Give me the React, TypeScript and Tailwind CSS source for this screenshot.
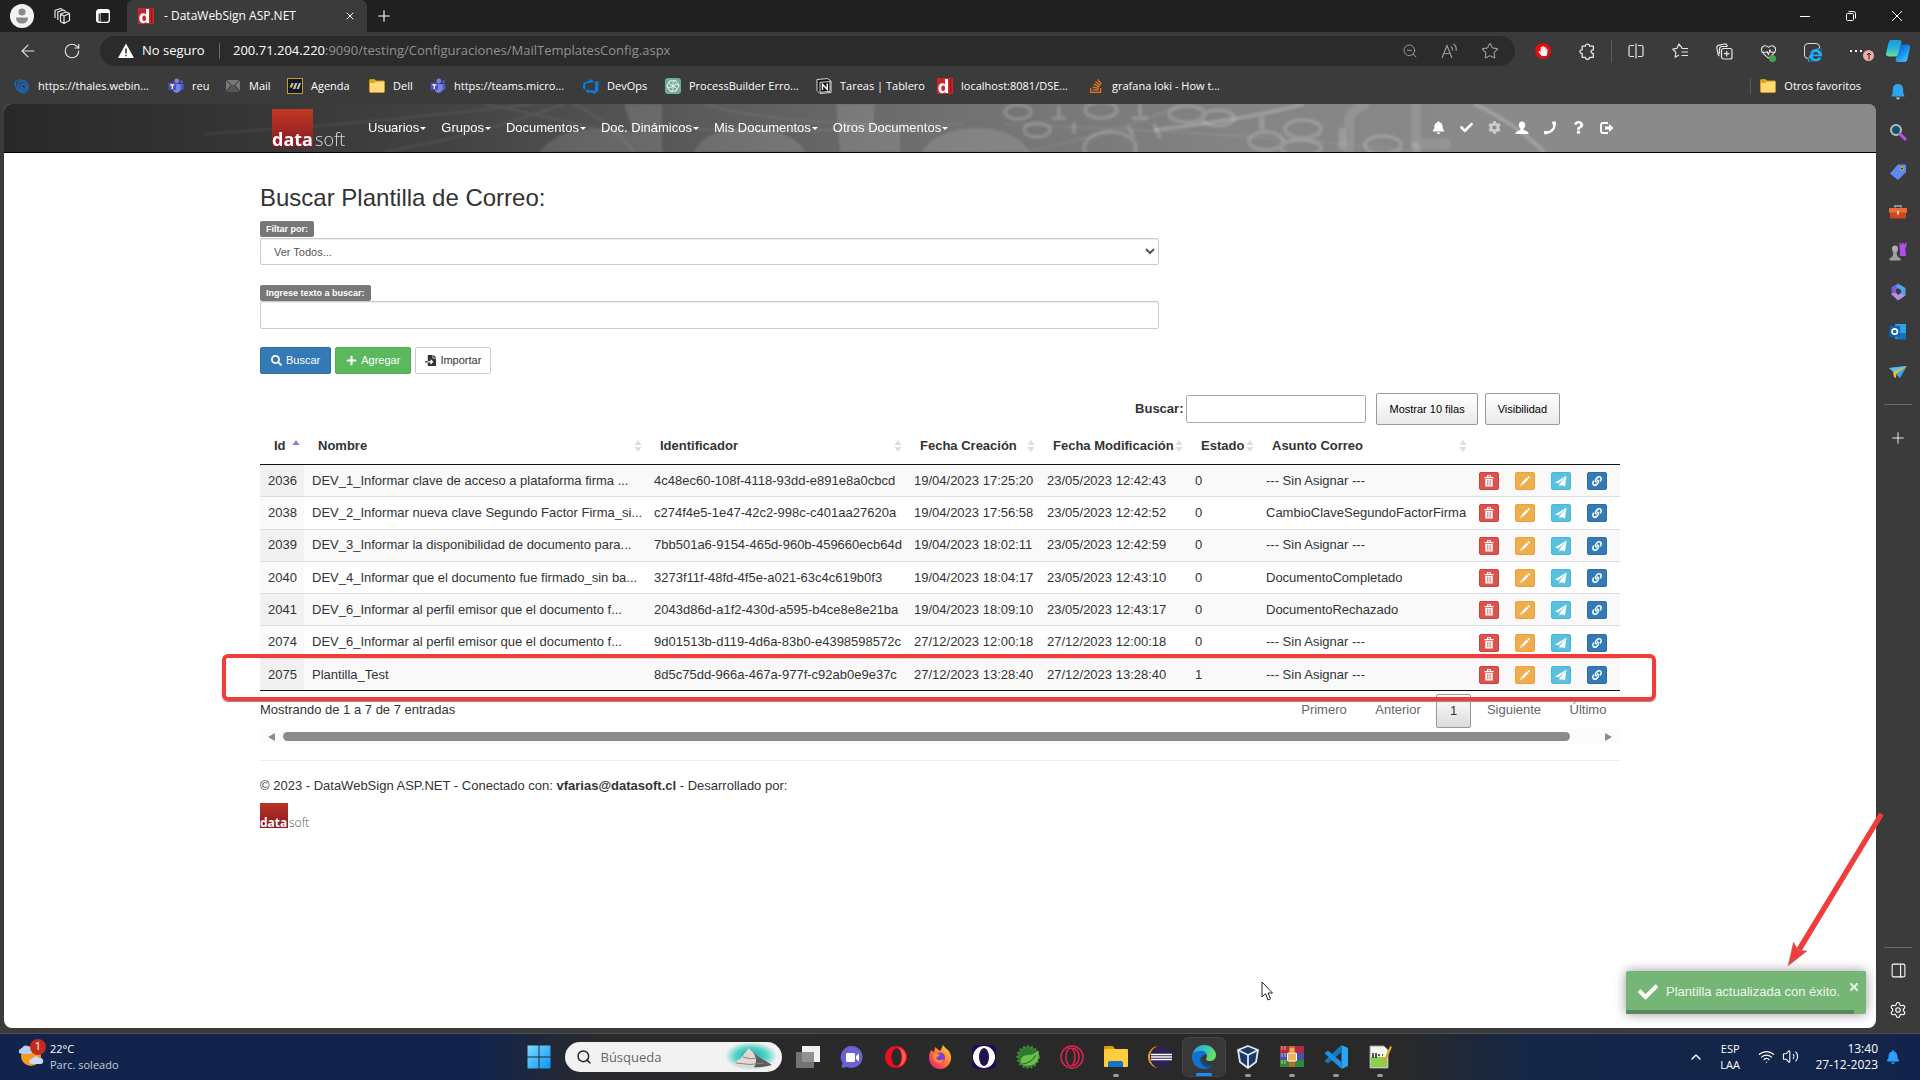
import React from "react";
import {
  FaBell, FaCheck, FaCog, FaQuestion, FaSearch, FaPlus, FaFileImport,
  FaLink, FaStackOverflow, FaInternetExplorer, FaTimes, FaHandPaper,
} from "react-icons/fa";
import {
  ArrowLeft, RotateCw, X, Plus, ZoomOut, Star, HeartPulse, Settings, PanelRight,
  ChevronUp, Wifi, Volume2, Search,
} from "lucide-react";

/* ---------- brand marks ---------- */

function DataMark({ className }: { className: string }) {
  return (
    <svg viewBox="0 0 16 16" className={className} aria-hidden="true">
      <rect width="16" height="16" fill="#c9252b" />
      <path d="M8 1h3v14H8.2v-1.2C7.500 14.700 6.700 15.200 5.400 15.200 3 15.200 1.300 13.300 1.300 10.200S3 5.200 5.400 5.200c1.100 0 2 .4 2.600 1.200zM6.200 7.500c-1.200 0-1.900 1-1.900 2.700s.7 2.700 1.900 2.700S8 11.900 8 10.200 7.400 7.500 6.200 7.500z" fill="#fff" />
      <rect x="13" y="1" width="1.200" height="14" fill="#8e1217" />
    </svg>
  );
}

function DatasoftLogo({ small }: { small?: boolean }) {
  return small ? (
    <div className="flex items-end font-['Open_Sans',sans-serif] text-[12px] leading-[10px]">
      <span className="flex h-[25px] w-[28px] items-end bg-linear-to-b from-[#b9341f] to-[#8c1724] font-bold text-white">data</span>
      <span className="pl-px font-light text-[#555]">soft</span>
    </div>
  ) : (
    <div className="flex items-end font-['Open_Sans',sans-serif] text-[18px] leading-[15px]">
      <span className="flex h-[38px] w-[41px] items-end bg-linear-to-b from-[#bf3a20] to-[#8c1724] font-bold text-white">data</span>
      <span className="pl-[2px] font-light text-[#dcdcdc]">soft</span>
    </div>
  );
}

function Teams() {
  return (
    <svg viewBox="0 0 16 16" className="size-4" aria-hidden="true">
      <circle cx="8.800" cy="3" r="2.400" fill="#7b83eb" /><circle cx="13.500" cy="3.800" r="1.600" fill="#5059c9" />
      <path d="M11 6h4.500v4.500a2.500 2.500 0 0 1-4.500 1z" fill="#5059c9" />
      <path d="M5 6h7.500v5.500a4 4 0 0 1-7.500 1z" fill="#7b83eb" />
      <rect x="0.500" y="4.500" width="7.500" height="7.500" rx="0.800" fill="#4b53bc" />
      <path d="M2.300 6.300h4v1.200H4.900v3.500H3.700V7.500H2.300z" fill="#fff" />
    </svg>
  );
}
function Folder() {
  return (
    <svg viewBox="0 0 16 16" className="size-4" aria-hidden="true">
      <path d="M.5 2.500q0-1 1-1h4l1.500 1.500h7.500q1 0 1 1v9.500q0 1-1 1h-13q-1 0-1-1z" fill="#ffd978" stroke="#c99a1b" />
      <path d="M1 2h4.500L7 3.500 5.500 5H1z" fill="#e0a818" />
    </svg>
  );
}
function Thales() {
  return (
    <svg viewBox="0 0 16 16" className="size-4" fill="none" stroke="#1b69c4" strokeLinecap="round" aria-hidden="true">
      <path d="M1 4c0 6 3 10 8 10 3 0 5-2 5-5S12 3 8.500 3 4 5 4 8s2 4 4.500 4S12 10 12 8.500 10.500 6 9 6 6.500 7 6.500 8.500 8 10.500 9 10" strokeWidth="1.500" />
      <path d="M2 3c3-2 9-2 12 3M3 11c2 3 5 4 8 4" />
    </svg>
  );
}
function MailIcon() {
  return (
    <svg viewBox="0 0 16 16" className="size-4" aria-hidden="true">
      <rect x="1" y="2" width="14" height="12" fill="#77787a" /><path d="M1 14l5.500-6L8 9l1.500-1 5.500 6z" fill="#55565a" /><path d="M1 2l7 6.500L15 2M1 14l5-6.500M15 14l-5-6.500" fill="none" stroke="#2c2c2c" />
    </svg>
  );
}
function AgendaIcon() {
  return (
    <svg viewBox="0 0 16 16" className="size-4" aria-hidden="true">
      <rect x=".5" y=".5" width="15" height="15" fill="#111a26" stroke="#c79b2a" />
      <path d="M2.500 9.500 4.500 5h2.200L5 9.500z" fill="#f3c22f" /><path d="M5.800 11 8.200 5h2.200L8.200 11zM9.500 11 12 5h2l-2.200 6z" fill="#b9c3cc" />
    </svg>
  );
}
function DevOpsIcon() {
  return (
    <svg viewBox="0 0 16 16" className="size-4" fill="#0b7bdc" aria-hidden="true">
      <path d="M15.500 3v9.500L11.500 16 5.500 13.700V16L2 11.800l10 .8V4zM12 4 6.500.5v2.200L1.500 4.200 0 6v4.500l2.200 1V5.700z" />
    </svg>
  );
}
function GptIcon() {
  return (
    <svg viewBox="0 0 16 16" className="size-4" aria-hidden="true">
      <rect width="16" height="16" rx="3" fill="#74aa9c" />
      <g fill="none" stroke="#fff" strokeWidth=".8">
        {[0, 60, 120, 180, 240, 300].map((a) => (
          <path key={a} d="M8 8V4.500a2 2 0 0 1 3.600-1.100" transform={`rotate(${a} 8 8)`} />
        ))}
        <circle cx="8" cy="8" r="5.500" strokeWidth=".7" />
      </g>
    </svg>
  );
}
function NotionIcon() {
  return (
    <svg viewBox="0 0 16 16" className="size-4" aria-hidden="true">
      <path d="M1 1.500 11.500.6 15 3v11.500L4 15.500 1 12.500z" fill="#111" stroke="#ddd" strokeWidth="1" />
      <path d="M4 4.300 14 3.600v9.900L4 14.200z" fill="#111" stroke="#eee" strokeWidth=".9" />
      <path d="M6.500 12V6.300l4.800 5.200V5.500" fill="none" stroke="#fff" strokeWidth="1.400" />
    </svg>
  );
}

const bookmarks: { w: string; icon: React.ReactNode; text: string }[] = [
  { w: "w-[154px]", icon: <Thales />, text: "https://thales.webin..." },
  { w: "w-[57px]", icon: <Teams />, text: "reu" },
  { w: "w-[62px]", icon: <MailIcon />, text: "Mail" },
  { w: "w-[82px]", icon: <AgendaIcon />, text: "Agenda" },
  { w: "w-[61px]", icon: <Folder />, text: "Dell" },
  { w: "w-[153px]", icon: <Teams />, text: "https://teams.micro..." },
  { w: "w-[82px]", icon: <DevOpsIcon />, text: "DevOps" },
  { w: "w-[151px]", icon: <GptIcon />, text: "ProcessBuilder Erro..." },
  { w: "w-[121px]", icon: <NotionIcon />, text: "Tareas | Tablero" },
  { w: "w-[151px]", icon: <DataMark className="size-4" />, text: "localhost:8081/DSE..." },
  { w: "w-[150px]", icon: <FaStackOverflow className="size-4 text-[#e87722]" />, text: "grafana loki - How t..." },
];

/* ---------- browser chrome ---------- */

function TabBar() {
  return (
    <div className="flex h-8 shrink-0 bg-[#202020] text-white">
      <div className="flex w-[127px] items-center pl-[10px]">
        <button aria-label="Perfil" className="size-6">
          <svg viewBox="0 0 24 24" className="size-6"><circle cx="12" cy="12" r="12" fill="#f3f3f3" /><circle cx="12" cy="8" r="3.500" fill="#8a8a8a" /><path d="M6 13.500h12c0 4-2.500 6-6 6s-6-2-6-6z" fill="#8a8a8a" /></svg>
        </button>
        <button aria-label="Áreas de trabajo" className="ml-[19px]">
          <svg viewBox="0 0 18 18" className="size-[18px]" fill="none" stroke="#e8e8e8" strokeWidth="1.200" strokeLinejoin="round">
            <path d="M7.500 7 13 5l3.500 1.500v7L11 16.500 7.500 14.500zM7.500 7l3.500 2 5.500-2.500M11 9v7.500M4.800 13V5L10 3l2.500 1M2 11V3.500L7.500 1.500 9.500 2.500" />
          </svg>
        </button>
        <button aria-label="Acciones de pestañas" className="ml-6">
          <svg viewBox="0 0 16 16" className="size-4"><rect x="1.700" y="1.700" width="12.600" height="12.600" rx="2.300" fill="none" stroke="#fff" strokeWidth="1.300" /><path d="M1.500 4q0-2.500 2.500-2.500h8q2.500 0 2.500 2.500v1h-9v9.500H4Q1.500 14.500 1.500 12z" fill="#fff" /><path d="M4.200 5.500v8" stroke="#202020" strokeWidth="1.200" /></svg>
        </button>
      </div>
      <div className="flex w-[240px] items-center rounded-t-md bg-[#3b3b3b] px-[11px] text-[12px]">
        <DataMark className="size-4" />
        <span className="ml-[10px] flex-1 whitespace-nowrap">- DataWebSign ASP.NET</span>
        <button aria-label="Cerrar pestaña"><X className="size-3" strokeWidth={2} /></button>
      </div>
      <button aria-label="Nueva pestaña" className="px-2"><Plus className="size-[18px]" strokeWidth={1.500} /></button>
      <div className="ml-auto flex">
        <button aria-label="Minimizar" className="flex w-[46px] items-center justify-center"><span className="h-px w-[10px] bg-white" /></button>
        <button aria-label="Restaurar" className="flex w-[46px] items-center justify-center">
          <svg viewBox="0 0 10 10" className="size-[10px]" fill="none" stroke="#fff"><rect x=".5" y="2.500" width="7" height="7" rx="1" /><path d="M2.500.5h5a2 2 0 0 1 2 2v5" /></svg>
        </button>
        <button aria-label="Cerrar" className="flex w-[46px] items-center justify-center">
          <svg viewBox="0 0 10 10" className="size-[10px]" stroke="#fff"><path d="M0 0l10 10M10 0 0 10" /></svg>
        </button>
      </div>
    </div>
  );
}

function IconButton({ label, children }: { label: string; children: React.ReactNode }) {
  return <button aria-label={label} className="flex w-11 items-center justify-center text-[#e6e6e6]">{children}</button>;
}

function Toolbar() {
  return (
    <div className="flex h-[38px] shrink-0 items-center text-white">
      <div className="flex w-[100px] pl-[6px]">
        <IconButton label="Atrás"><ArrowLeft className="size-5" strokeWidth={1.300} /></IconButton>
        <IconButton label="Actualizar"><RotateCw className="size-[18px]" strokeWidth={1.500} /></IconButton>
      </div>
      <div className="flex h-[30px] flex-1 items-center rounded-full bg-[#2b2b2b] pr-[5px] pl-[18px]">
        <svg viewBox="0 0 16 16" className="size-4" aria-hidden="true"><path d="M8 .5 16 15H0z" fill="#fff" /><path d="M8 5.500v5M8 11.800v1.500" stroke="#2b2b2b" strokeWidth="1.500" /></svg>
        <span className="ml-2 w-[77px] text-[13px]">No seguro</span>
        <span className="mr-[13px] h-4 w-px bg-[#6a6a6a]" />
        <div className="flex-1 text-[13px] whitespace-nowrap text-[#929292]"><span className="text-white">200.71.204.220</span>:9090/testing/Configuraciones/MailTemplatesConfig.aspx</div>
        <button aria-label="Alejar" className="flex w-10 justify-center text-[#9a9a9a]"><ZoomOut className="size-4" strokeWidth={1.500} /></button>
        <button aria-label="Leer en voz alta" className="flex w-10 justify-center">
          <svg viewBox="0 0 18 16" className="h-4 w-[18px]" fill="none" stroke="#9a9a9a" strokeWidth="1.200"><path d="M1 15 6 2.500 11 15M2.800 10.500h6.400M10 3.500q2 1.500 1.500 4M12.500 1q3.500 2.500 2.500 7" /></svg>
        </button>
        <button aria-label="Agregar a favoritos" className="flex w-10 justify-center text-[#9a9a9a]"><Star className="size-[18px]" strokeWidth={1.500} /></button>
      </div>
      <div className="flex w-[405px] pl-[6px]">
        <button aria-label="Bloqueador" className="flex w-11 items-center justify-center">
          <span className="flex size-4 items-center justify-center rounded-full bg-[#e40d0d]"><FaHandPaper className="size-[10px]" /></span>
        </button>
        <IconButton label="Extensiones">
          <svg viewBox="0 0 16 16" className="size-[17px]" fill="none" stroke="currentColor" strokeWidth="1.200" strokeLinejoin="round"><path d="M3 3h3a2 2 0 1 1 4 0h3.500v3.500a1.700 1.700 0 1 0 0 3.300V13.500H10a2 2 0 1 1-4 0H3V9.800a1.700 1.700 0 1 1 0-3.300z" /></svg>
        </IconButton>
        <div className="ml-[2px] flex border-l border-[#5c5c5c] pl-[2px]">
          <IconButton label="Pantalla dividida">
            <svg viewBox="0 0 16 16" className="size-4" fill="none" stroke="currentColor" strokeWidth="1.200"><path d="M6 2.500H2.500A1.500 1.500 0 0 0 1 4v8a1.500 1.500 0 0 0 1.500 1.500H6M10 2.500h3.500A1.500 1.500 0 0 1 15 4v8a1.500 1.500 0 0 1-1.500 1.500H10M8 .5v15" /></svg>
          </IconButton>
          <IconButton label="Favoritos">
            <svg viewBox="0 0 17 16" className="h-4 w-[17px]" fill="none" stroke="currentColor" strokeWidth="1.200" strokeLinejoin="round"><path d="M10 4.800 7 1 5 5.300.8 6l3 3.300-.6 4.900L7 12M9.500 5.500H16M9.500 9H16M9.500 12.500H16" /></svg>
          </IconButton>
          <IconButton label="Colecciones">
            <svg viewBox="0 0 17 17" className="size-[17px]" fill="none" stroke="currentColor" strokeWidth="1.200"><rect x="5.500" y="5.500" width="10.500" height="10.500" rx="2" /><path d="M10.700 8v5.500M8 10.700h5.500M3.500 13Q2.500 12.500 2 11L.8 4.500Q.6 2.800 2.300 2.300L8.500 1q2-.3 2.500 1.500l.2.800M3.500 11V6q0-2.500 2.500-2.500h5.500" /></svg>
          </IconButton>
          <button aria-label="Rendimiento" className="relative flex w-11 items-center justify-center text-[#e6e6e6]"><HeartPulse className="size-[17px]" strokeWidth={1.500} /><span className="absolute right-[14px] bottom-0 size-[7px] rounded-full bg-[#3da64a]" /></button>
          <button aria-label="Modo IE" className="relative flex w-11 items-center justify-center">
            <span className="size-4 rounded-sm border border-[#ddd]" /><FaInternetExplorer className="absolute right-3 bottom-0 size-[14px] bg-[#3b3b3b] text-[#26a9f0]" />
          </button>
          <button aria-label="Más opciones" className="relative flex w-11 items-center justify-center gap-[3px]">
            <span className="size-[2px] bg-white" /><span className="size-[2px] bg-white" /><span className="size-[2px] bg-white" />
            <span className="absolute top-[10px] right-1 flex size-[11px] items-center justify-center rounded-full bg-[#f4a9a5]">
              <svg viewBox="0 0 8 8" className="size-2" fill="none" stroke="#222"><path d="M4 7.500V1M2 3l2-2 2 2" /></svg>
            </span>
          </button>
          <button aria-label="Copilot" className="flex w-10 items-center justify-center">
            <svg viewBox="0 0 24 22" className="h-[22px] w-6">
              <defs>
                <linearGradient id="cpa" x1="0" y1="0" x2="0" y2="1"><stop offset="0" stopColor="#1a9be8" /><stop offset=".5" stopColor="#25b5d6" /><stop offset="1" stopColor="#6fe08e" /></linearGradient>
                <linearGradient id="cpb" x1="0" y1="0" x2=".7" y2="1"><stop offset="0" stopColor="#0f4fa8" /><stop offset=".5" stopColor="#1b86f0" /><stop offset="1" stopColor="#35c6ff" /></linearGradient>
              </defs>
              <path d="M19 22h-7q-3 0-2.300-3L13 7q.8-2.500 3-2.500h5q3.500 0 3 3L21.500 19q-.8 3-2.500 3z" fill="url(#cpb)" />
              <path d="M5 0h8q3 0 2.300 3L12 14q-.8 2.500-3 2.500H3q-3.500 0-3-3L2.500 3Q3.200 0 5 0z" fill="url(#cpa)" />
            </svg>
          </button>
        </div>
      </div>
    </div>
  );
}

function BookmarksBar() {
  return (
    <nav aria-label="Favoritos" className="flex h-[34px] shrink-0 items-center pb-[2px] pl-[14px] text-[11px] text-white">
      {bookmarks.map((b) => (
        <a key={b.text} href="#" className={`${b.w} flex items-center gap-2 whitespace-nowrap`}>{b.icon}{b.text}</a>
      ))}
      <a href="#" className="mr-[15px] ml-auto flex items-center gap-2 border-l border-[#5c5c5c] pl-[9px] whitespace-nowrap"><Folder />Otros favoritos</a>
    </nav>
  );
}

function SideItem({ label, children }: { label: string; children: React.ReactNode }) {
  return (
    <button aria-label={label} className="flex h-10 items-center justify-center">
      <svg viewBox="0 0 18 18" className="size-[18px]">{children}</svg>
    </button>
  );
}

function EdgeSidebar() {
  return (
    <aside className="flex w-11 shrink-0 flex-col pt-[2px] text-white">
      <SideItem label="Notificaciones"><path d="M9 1c3.600 0 5.200 2.600 5.200 5.500V10l1.600 3.500H2.200L3.800 10V6.500C3.800 3.600 5.400 1 9 1z" fill="#2ea6ee" /><path d="M7 14.500h4q-.5 2-2 2t-2-2z" fill="#c9c9c9" /></SideItem>
      <SideItem label="Buscar"><circle cx="7" cy="7" r="5" fill="#17516f" stroke="#bdbdbd" strokeWidth="2" /><path d="m11 11 5 5" stroke="#c24df0" strokeWidth="3" strokeLinecap="round" /></SideItem>
      <SideItem label="Compras"><path d="M9 2h7.500v7L9 16.500 1.500 10.500z" fill="#5b8cf5" stroke="#5b8cf5" strokeLinejoin="round" /><circle cx="13" cy="5.500" r="1.600" fill="#333" stroke="#f2c200" /></SideItem>
      <SideItem label="Herramientas"><path d="M6 4.500V3h6v1.500" fill="none" stroke="#aaa" strokeWidth="1.500" /><rect x="0" y="5" width="18" height="5" rx="1" fill="#f06a35" /><rect x="1" y="9.500" width="16" height="6" rx="1" fill="#cf4620" /><rect x="8" y="8" width="2" height="3.500" fill="#ddd" /></SideItem>
      <SideItem label="Juegos"><path d="M10.500 0H12v1.500h1.200V0h1.600v1.500H16V0h1.800l-.6 4-1 1 .8 8h-6z" fill="#b44df0" /><circle cx="6" cy="5.500" r="3" fill="#b0b0b0" /><path d="M3.500 8h5v1.500h-1l1 4 3 2V17.500H.5v-2l3-2 1-4h-1z" fill="#a0a0a0" /></SideItem>
      <SideItem label="Microsoft 365"><path d="M9 .5 2.500 4v8L7 9.500v-3L12 3.500z" fill="#7a5bd8" /><path d="M9 .5 16.500 5v7.500L12 10V7L7 4z" fill="#49a6ec" /><path d="M2 11l7 6.500 7.500-5L12 10l-3 2-2-2.500z" fill="#b490e8" /></SideItem>
      <SideItem label="Outlook"><rect x="6" y="1" width="11" height="15" rx="1" fill="#2fa3e8" /><path d="M11 10h6v6.500H7z" fill="#1571c2" /><rect x="0.500" y="3" width="10.500" height="11" rx="1" fill="#0f63b8" /><circle cx="5.700" cy="8.500" r="2.700" fill="none" stroke="#fff" strokeWidth="1.700" /></SideItem>
      <SideItem label="Drop"><path d="M0 5 18 3l-7 12-3.500-3z" fill="#32a6ee" /><path d="M0 5 18 3 5 9z" fill="#58c0f5" /><path d="M4 9 18 3 7 11v4l-2-1z" fill="#f4b92f" /></SideItem>
      <span className="mx-2 mt-3 h-px bg-[#6a6a6a]" />
      <button aria-label="Personalizar" className="mt-6 flex justify-center"><Plus className="size-[18px]" strokeWidth={1.200} /></button>
      <span className="mx-2 mt-auto h-px bg-[#6a6a6a]" />
      <button aria-label="Panel" className="mt-[14px] flex justify-center"><PanelRight className="size-[17px]" strokeWidth={1.500} /></button>
      <button aria-label="Configuración" className="mt-[22px] mb-[9px] flex justify-center"><Settings className="size-[18px]" strokeWidth={1.500} /></button>
    </aside>
  );
}

/* ---------- web page ---------- */

function HeaderArt() {
  return (
    <svg viewBox="0 0 1872 48" preserveAspectRatio="xMidYMid slice" className="absolute inset-0 size-full" aria-hidden="true">
      <defs>
        <linearGradient id="hd" x1="0" x2="1"><stop offset="0" stopColor="#282828" /><stop offset=".13" stopColor="#363636" /><stop offset=".24" stopColor="#434343" /><stop offset=".34" stopColor="#555" /><stop offset=".5" stopColor="#707070" /><stop offset=".66" stopColor="#848484" /><stop offset=".8" stopColor="#8a8a8a" /><stop offset="1" stopColor="#8a8a8a" /></linearGradient>
        <filter id="soft"><feGaussianBlur stdDeviation="1.200" /></filter>
      </defs>
      <rect width="1872" height="48" fill="url(#hd)" />
      <g filter="url(#soft)" fill="none" stroke="#fff">
        <g fill="#fff" stroke="none" opacity=".12">
          <path d="M536 48C548 30 575 24 600 24s50 8 60 24zM690 48c8-18 30-24 54-24s46 6 58 24zM918 48c10-17 32-24 54-24s44 7 54 24zM832 0h38v24h26v24h-60zM620 0h38v48h-22z" />
        </g>
        <g opacity=".08" strokeWidth="2"><path d="M200 30q160-10 330-30M380 48Q480 30 560 0M480 0q60 12 110 24M570 0q40 20 60 48M640 22q130 10 260 0M700 0q80 24 260 20M1000 20q260 10 420 28M1180 0q-70 30-160 48" /></g>
        <g opacity=".16" strokeWidth="4">
          <ellipse cx="1014" cy="8" rx="13" ry="7" /><path d="M1055 2v12M1136 0v12M1048 14h14M1128 14h16" /><ellipse cx="1097" cy="6" rx="16" ry="8" />
          <ellipse cx="1183" cy="10" rx="18" ry="8" /><ellipse cx="1214" cy="14" rx="16" ry="8" /><path d="M1258 12v14" strokeWidth="6" />
          <ellipse cx="1033" cy="26" rx="13" ry="7" /><path d="M1070 18v12M1124 22l6 12M1150 20l6 14" /><ellipse cx="1106" cy="44" rx="26" ry="16" />
          <ellipse cx="1262" cy="37" rx="17" ry="9" /><ellipse cx="1299" cy="25" rx="18" ry="9" /><ellipse cx="1297" cy="44" rx="20" ry="8" />
          <path d="M1338 24v22M1410 38l4 10" strokeWidth="7" /><ellipse cx="1379" cy="41" rx="18" ry="9" />
        </g>
        <path d="M1345 48V20q0-16 20-20M1412 0v40h34" opacity=".1" strokeWidth="10" />
        <path d="M1150 26Q1240 16 1300 0M1470 0q40 18 70 48" opacity=".2" strokeWidth="4" />
      </g>
    </svg>
  );
}

const menus = ["Usuarios", "Grupos", "Documentos", "Doc. Dinámicos", "Mis Documentos", "Otros Documentos"];

function SiteHeader() {
  return (
    <header className="relative flex h-[49px] shrink-0 justify-center border-b border-black bg-[#555]">
      <HeaderArt />
      <div className="relative flex w-full max-w-[1360px] items-center pb-px pl-3 text-[13px] text-white">
        <a href="#" aria-label="datasoft" className="w-[96px]"><DatasoftLogo /></a>
        <nav className="flex gap-[15px]">
          {menus.map((m) => (
            <button key={m} className="flex items-center gap-px whitespace-nowrap">
              {m}
              <span className="mt-px border-x-[3px] border-t-[3px] border-x-transparent border-t-white" />
            </button>
          ))}
        </nav>
        <div className="ml-auto flex">
          <button aria-label="Avisos" className="flex w-7 justify-center"><FaBell className="size-[13px]" /></button>
          <button aria-label="Aprobar" className="flex w-7 justify-center"><FaCheck className="size-[13px]" /></button>
          <button aria-label="Ajustes" className="flex w-7 justify-center"><FaCog className="size-[13px] text-[#ccc]" /></button>
          <button aria-label="Usuario" className="flex w-7 justify-center">
            <svg viewBox="0 0 14 14" className="size-[14px]" fill="#fff"><path d="M7 .5c2 0 3.200 1.400 3.200 3.500 0 1.600-.7 3-1.700 3.800v1l4 2q1 .5 1 1.500V13H.5v-.7q0-1 1-1.500l4-2v-1C4.500 7 3.800 5.600 3.800 4 3.800 1.900 5 .5 7 .5z" /></svg>
          </button>
          <button aria-label="Teléfono" className="flex w-7 justify-center">
            <svg viewBox="0 0 14 14" className="size-[14px]" fill="none" stroke="#fff"><path d="M11.500 2.500Q12 10.500 3 11.800" strokeWidth="2.200" /><path d="M9.300 2.200l3.500-.6M1.200 11l3.600 1M11.500 1v3.500M2.500 10.200v3" strokeWidth="2.800" /></svg>
          </button>
          <button aria-label="Ayuda" className="flex w-7 justify-center"><FaQuestion className="size-[13px]" /></button>
          <button aria-label="Salir" className="flex w-7 justify-center">
            <svg viewBox="0 0 15 14" className="h-[14px] w-[15px]" fill="none" stroke="#fff"><path d="M9 2H4Q2 2 2 4v6q0 2 2 2h5" strokeWidth="1.800" /><path d="M6 5.500h4V3l4.500 4L10 11V8.500H6z" fill="#fff" stroke="none" /></svg>
          </button>
        </div>
      </div>
    </header>
  );
}

const rows = [
  ["2036", "DEV_1_Informar clave de acceso a plataforma firma ...", "4c48ec60-108f-4118-93dd-e891e8a0cbcd", "19/04/2023 17:25:20", "23/05/2023 12:42:43", "0", "--- Sin Asignar ---"],
  ["2038", "DEV_2_Informar nueva clave Segundo Factor Firma_si...", "c274f4e5-1e47-42c2-998c-c401aa27620a", "19/04/2023 17:56:58", "23/05/2023 12:42:52", "0", "CambioClaveSegundoFactorFirma"],
  ["2039", "DEV_3_Informar la disponibilidad de documento para...", "7bb501a6-9154-465d-960b-459660ecb64d", "19/04/2023 18:02:11", "23/05/2023 12:42:59", "0", "--- Sin Asignar ---"],
  ["2040", "DEV_4_Informar que el documento fue firmado_sin ba...", "3273f11f-48fd-4f5e-a021-63c4c619b0f3", "19/04/2023 18:04:17", "23/05/2023 12:43:10", "0", "DocumentoCompletado"],
  ["2041", "DEV_6_Informar al perfil emisor que el documento f...", "2043d86d-a1f2-430d-a595-b4ce8e8e21ba", "19/04/2023 18:09:10", "23/05/2023 12:43:17", "0", "DocumentoRechazado"],
  ["2074", "DEV_6_Informar al perfil emisor que el documento f...", "9d01513b-d119-4d6a-83b0-e4398598572c", "27/12/2023 12:00:18", "27/12/2023 12:00:18", "0", "--- Sin Asignar ---"],
  ["2075", "Plantilla_Test", "8d5c75dd-966a-467a-977f-c92ab0e9e37c", "27/12/2023 13:28:40", "27/12/2023 13:28:40", "1", "--- Sin Asignar ---"],
];
const heads = ["Id", "Nombre", "Identificador", "Fecha Creación", "Fecha Modificación", "Estado", "Asunto Correo"];

function TrashIcon() {
  return (
    <svg viewBox="0 0 12 12" className="size-3">
      <path d="M1.500 2h9v1.300h-9zM4 .3h4V2H7V1.200H5V2H4zM2.300 4h7.400v7.500H2.300z" fill="#fff" />
      <path d="M4.500 4.800v5.700M6 4.800v5.700M7.500 4.800v5.700" stroke="#d9534f" strokeWidth=".6" />
    </svg>
  );
}
function PencilIcon() {
  return <svg viewBox="0 0 12 12" className="size-3" fill="#fff"><path d="M9.500.8 11.200 2.500 10 3.700 8.300 2zM7.700 2.600l1.700 1.700L4 9.700 2.300 8zM1.800 8.600l1.600 1.600-2.400.8z" /></svg>;
}
function SendIcon() {
  return <svg viewBox="0 0 12 12" className="size-3" fill="#fff"><path d="M11.500.5 0 7.500l3.500 1zM11.500.5 4.500 9v2.800L6.500 10l3.500 1.500z" /></svg>;
}

const actions = [
  { label: "Eliminar", cls: "bg-[#d9534f] border-[#d43f3a]", icon: <TrashIcon /> },
  { label: "Editar", cls: "bg-[#f0ad4e] border-[#eea236]", icon: <PencilIcon /> },
  { label: "Enviar", cls: "bg-[#5bc0de] border-[#46b8da]", icon: <SendIcon /> },
  { label: "Vincular", cls: "bg-[#337ab7] border-[#2e6da4]", icon: <FaLink className="size-[10px]" /> },
];

function TemplatesTable() {
  return (
    <div className="relative mt-[3px]">
      <table className="h-[263px] w-full table-fixed border-separate border-spacing-0 text-left text-[13px] text-[#333]">
        <colgroup>
          <col className="w-[44px]" /><col /><col className="w-[260px]" /><col className="w-[133px]" /><col className="w-[148px]" /><col className="w-[71px]" />
          <col className="w-[213px]" /><col className="w-9" /><col className="w-9" /><col className="w-9" /><col className="w-[41px]" />
        </colgroup>
        <thead>
          <tr className="h-[37px]">
            {heads.map((h, i) => (
              <th key={h} className="border-b border-[#111] p-0 pl-[14px] font-bold whitespace-nowrap">
                <div className="flex items-center justify-between pr-1">
                  {h}
                  <svg viewBox="0 0 8 12" className="h-3 w-2" aria-hidden="true">
                    <path d="M4 0 7.500 5h-7z" fill={i === 0 ? "#7f7fe0" : "#ddd"} />
                    {i > 0 && <path d="M4 12 .5 7h7z" fill="#ddd" />}
                  </svg>
                </div>
              </th>
            ))}
            <th colSpan={4} aria-label="Acciones" className="border-b border-[#111] p-0" />
          </tr>
        </thead>
        <tbody>
          {rows.map((r) => (
            <tr key={r[0]} className="group odd:bg-[#f9f9f9]">
              {r.map((c, i) => (
                <td key={i} className="border-b border-[#ddd] p-0 pl-2 whitespace-nowrap group-last:border-[#111] first:bg-[#fafafa] group-odd:first:bg-[#f1f1f1]">{c}</td>
              ))}
              {actions.map((a) => (
                <td key={a.label} className="border-b border-[#ddd] p-0 pl-2 group-last:border-[#111]">
                  <button aria-label={a.label} className={`${a.cls} mt-px flex h-[18px] w-5 items-center justify-center rounded-xs border text-white`}>{a.icon}</button>
                </td>
              ))}
            </tr>
          ))}
        </tbody>
      </table>
      <div className="pointer-events-none absolute -right-9 -bottom-[10px] -left-[38px] h-[47px] rounded-md border-4 border-[#f23b3b] shadow-[0_1px_1px_#888]" />
    </div>
  );
}

function Badge({ htmlFor, children }: { htmlFor: string; children: React.ReactNode }) {
  return <label htmlFor={htmlFor} className="block w-fit rounded-xs bg-[#777] px-[6px] text-[9px] leading-4 font-bold text-white">{children}</label>;
}

const dtButton = "h-8 rounded-xs border border-[#999] bg-linear-to-b from-white to-[#e9e9e9] px-3 text-[11px] text-black";

function Page() {
  return (
    <div className="relative ml-1 flex min-h-0 flex-1 flex-col overflow-hidden rounded-lg bg-white font-['Liberation_Sans',Arial,sans-serif]">
      <SiteHeader />
      <main className="mx-auto w-full max-w-[1360px] text-[#333]">
        <h1 className="mt-[30px] text-[24px] leading-[30px]">Buscar Plantilla de Correo:</h1>
        <div className="mt-2 max-w-[899px]">
          <Badge htmlFor="filtro">Filtar por:</Badge>
          <select id="filtro" className="mt-[1px] block h-[27px] w-full rounded-xs border border-[#ccc] bg-white px-[9px] text-[11px] text-[#555] shadow-[inset_0_1px_1px_rgba(0,0,0,.075)]"><option>Ver Todos...</option></select>
          <div className="h-5" />
          <Badge htmlFor="texto">Ingrese texto a buscar:</Badge>
          <input id="texto" type="text" className="block h-7 w-full rounded-xs border border-[#ccc] bg-white px-2 text-[11px] shadow-[inset_0_1px_1px_rgba(0,0,0,.075)]" />
        </div>
        <div className="mt-[18px] flex gap-1 text-[11px]">
          <button className="flex h-[27px] items-center gap-1 rounded-xs border border-[#2e6da4] bg-[#337ab7] px-[10px] text-white"><FaSearch className="size-[11px]" />Buscar</button>
          <button className="flex h-[27px] items-center gap-1 rounded-xs border border-[#4cae4c] bg-[#5cb85c] px-[10px] text-white"><FaPlus className="size-[11px]" />Agregar</button>
          <button className="flex h-[27px] items-center gap-1 rounded-xs border border-[#ccc] bg-white px-[9px] text-[#333]"><FaFileImport className="size-[11px]" />Importar</button>
        </div>
        <div className="mt-[19px] mr-[60px] flex items-center justify-end">
          <label htmlFor="dt-search" className="text-[13px] font-bold">Buscar:</label>
          <input id="dt-search" type="search" className="mr-[10px] ml-[3px] h-7 w-[180px] rounded-xs border border-[#aaa] bg-white px-1" />
          <button className={`${dtButton} mr-[7px]`}>Mostrar 10 filas</button>
          <button className={dtButton}>Visibilidad</button>
        </div>
        <TemplatesTable />
        <div className="mt-[3px] flex h-[35px] items-start justify-between text-[13px]">
          <p className="mt-[6px] leading-5">Mostrando de 1 a 7 de 7 entradas</p>
          <div className="flex text-[#666]">
            <button className="h-8 w-[74px]">Primero</button>
            <button className="h-8 w-[74px]">Anterior</button>
            <button className="mx-px h-[34px] w-[35px] rounded-xs border border-[#979797] bg-linear-to-b from-white to-[#dcdcdc] text-[#333]">1</button>
            <button className="h-8 w-[84px]">Siguiente</button>
            <button className="h-8 w-[64px]">Último</button>
          </div>
        </div>
        <div className="flex h-[15px] items-center bg-[#fcfcfc] px-2">
          <span className="border-y-4 border-r-[7px] border-y-transparent border-r-[#8b8b8b]" />
          <span className="mr-[35px] ml-2 h-[9px] flex-1 rounded-full bg-[#8b8b8b]" />
          <span className="border-y-4 border-l-[7px] border-y-transparent border-l-[#8b8b8b]" />
        </div>
        <hr className="mt-4 border-[#eee]" />
        <footer className="mt-[15px] text-[13px]">
          <p className="leading-5">© 2023 - DataWebSign ASP.NET - Conectado con: <b>vfarias@datasoft.cl</b> - Desarrollado por:</p>
          <a href="#" aria-label="datasoft" className="mt-[7px] block"><DatasoftLogo small /></a>
        </footer>
      </main>
      <div role="status" className="absolute right-[10px] bottom-[14px] flex h-[43px] w-[240px] items-center rounded-xs bg-[#75b575] pb-[2px] pl-3 text-[13px] text-white shadow-[0_0_12px_#999]">
        <FaCheck className="size-5" />
        <span className="ml-2 text-[#eef7ee]">Plantilla actualizada con éxito.</span>
        <button aria-label="Cerrar aviso" className="absolute top-[10px] right-[6px] text-[#e3f0e3]"><FaTimes className="size-3" /></button>
        <span className="absolute bottom-0 left-0 h-1 w-[228px] bg-[#5c895c]" />
      </div>
      <svg viewBox="0 0 12 20" className="absolute right-[603px] bottom-[27px] h-5 w-3" aria-hidden="true">
        <path d="M1 1v15l3.500-3.300L7 19l2.500-1.200L7 12h4.500z" fill="#fff" stroke="#222" />
      </svg>
    </div>
  );
}

/* ---------- Windows taskbar ---------- */

function TaskIcon({ label, state, children }: { label: string; state?: "open" | "active"; children: React.ReactNode }) {
  return (
    <button aria-label={label} className={state === "active" ? "relative flex h-10 w-11 items-center justify-center rounded-md border border-[#454545] bg-[#383838]" : "relative flex h-10 w-11 items-center justify-center"}>
      <svg viewBox="0 0 24 24" className="size-6">{children}</svg>
      {state === "active" && <span className="absolute bottom-0 h-[3px] w-4 rounded-full bg-[#1a90ff]" />}
      {state === "open" && <span className="absolute bottom-0 h-[3px] w-[6px] rounded-full bg-[#9a9a9a]" />}
    </button>
  );
}

function Taskbar() {
  return (
    <footer className="flex h-[47px] shrink-0 items-center border-t border-[#4a4d55] bg-[linear-gradient(90deg,#12244b_0%,#12244b_25%,#2a2a2c_31%,#292929_73%,#142749_80%,#12244b_100%)] pb-px text-white">
      <div className="flex flex-1 items-center pl-[18px]">
        <span className="relative h-8 w-8">
          <svg viewBox="0 0 28 28" className="size-7" aria-hidden="true">
            <circle cx="13" cy="15" r="10" fill="#f59a1d" />
            <path d="M1 12a4 4 0 0 1 3-5 5 5 0 0 1 9 1 3 3 0 0 1 0 5H4z" fill="#b9cdf3" /><path d="M11 21a3 3 0 0 1 3-3 4 4 0 0 1 7-1 3 3 0 0 1 2 6H13z" fill="#cbdaf8" />
          </svg>
          <span className="absolute -top-[2px] left-3 flex size-4 items-center justify-center rounded-full bg-[#c42b1c] text-[11px]">1</span>
        </span>
        <span className="text-[11px] leading-4">22°C<br /><span className="text-[#c7cddb]">Parc. soleado</span></span>
      </div>
      <div className="flex items-center">
        <TaskIcon label="Inicio">
          <defs><linearGradient id="win" x1="0" y1="0" x2="1" y2="1"><stop offset="0" stopColor="#7fdcff" /><stop offset="1" stopColor="#0a93f5" /></linearGradient></defs>
          <path d="M.5.5h11v11H.5zM12.500.5h11v11h-11zM.5 12.500h11v11H.5zM12.500 12.500h11v11h-11z" fill="url(#win)" />
        </TaskIcon>
        <div className="mr-1 ml-1 flex h-[30px] w-[217px] items-center overflow-hidden rounded-full bg-[#f2f2f2] pl-[11px]">
          <Search className="size-4 text-[#222]" strokeWidth={2.200} />
          <input aria-label="Búsqueda" placeholder="Búsqueda" className="ml-[9px] h-6 w-0 flex-1 bg-transparent text-[13px] placeholder:text-[#666]" />
          <svg viewBox="0 0 52 28" className="mr-1 h-7 w-[52px]" aria-hidden="true">
            <defs><radialGradient id="sky"><stop offset="0" stopColor="#1c9db0" /><stop offset=".6" stopColor="#55d3c4" /><stop offset="1" stopColor="#f2f2f2" /></radialGradient></defs>
            <ellipse cx="25" cy="13" rx="26" ry="14" fill="url(#sky)" />
            <path d="M23 5q3 4 10 9l13 8q-20 6-40 0l9-7z" fill="#ded9d2" /><path d="M23 5q3 4 10 9l13 8q-10 3-18 2Q34 15 23 5z" fill="#5d5a5c" /><path d="M17 14q8 3 14 1M10 20q14 3 28 0" stroke="#8b8680" fill="none" />
          </svg>
        </div>
        <TaskIcon label="Vista de tareas"><rect x="6" y="1" width="18" height="16" fill="#f0f0f0" /><rect x="0" y="7" width="18" height="16" fill="#808080" opacity=".85" /></TaskIcon>
        <TaskIcon label="Chat"><path d="M12 1a11 11 0 1 1-5 21l-5.500 1 1-5A11 11 0 0 1 12 1z" fill="#6a62d2" /><rect x="6" y="8" width="9" height="9" rx="1" fill="#fff" /><path d="m16 11 3-2.500v8L16 14z" fill="#fff" /></TaskIcon>
        <TaskIcon label="Opera"><circle cx="12" cy="12" r="11" fill="#e8101d" /><ellipse cx="12.500" cy="12" rx="5" ry="8.800" fill="#2a2a2a" /><path d="M14 2q8 3 8 10t-8 10q4-3 4-10T14 2z" fill="#ff5a4d" /></TaskIcon>
        <TaskIcon label="Firefox">
          <defs><linearGradient id="fx" x1="1" y1="0" x2="0" y2="1"><stop offset="0" stopColor="#ffe226" /><stop offset=".5" stopColor="#ff7139" /><stop offset="1" stopColor="#e31587" /></linearGradient></defs>
          <path d="M3 5l3 2 1-5 5 4q2-3 3-6 3 4 5 5 3 3 3 8a11 11 0 0 1-22 0q0-5 2-8z" fill="url(#fx)" /><circle cx="12" cy="12.500" r="5" fill="#7b3be0" /><path d="M5 9q5-2 7 1l-4 3q2 4 8 1-3 6-8 3-4-3-3-8z" fill="#ff8a2b" />
        </TaskIcon>
        <TaskIcon label="Opera beta"><rect width="24" height="24" rx="5" fill="#1d0b5e" /><circle cx="12" cy="12" r="11" fill="#fff" /><ellipse cx="12" cy="12" rx="5" ry="9" fill="#22104f" /></TaskIcon>
        <TaskIcon label="Spring">
          <circle cx="12" cy="12" r="10.500" fill="#2f7a2f" stroke="#3c8c38" strokeWidth="2.500" strokeDasharray="2 2" /><path d="M22 5q3 12-6 15-6 2-11-1-2-8 6-9 8 0 11-5z" fill="#6cbf4b" /><path d="M5 19q10 0 15-9" stroke="#2b6b2a" fill="none" strokeWidth="1.200" />
        </TaskIcon>
        <TaskIcon label="Opera GX"><g fill="none" stroke="#e0244e" strokeWidth="1.500"><circle cx="12" cy="12" r="11" /><ellipse cx="10.500" cy="12" rx="4.500" ry="9" /><path d="M13 3q6 2 6 9t-6 9" /></g></TaskIcon>
        <TaskIcon label="Explorador" state="open"><path d="M0 2q0-1 1-1h8l2 3h-11z" fill="#d99a0b" /><rect y="4" width="24" height="18" rx="1" fill="#ffcc3e" /><path d="M4 22v-4q0-2 2-2h11q2 0 2 2v4z" fill="#1673c4" /></TaskIcon>
        <TaskIcon label="Eclipse"><circle cx="11" cy="12" r="11" fill="#f39b1d" /><circle cx="13.500" cy="12" r="11.500" fill="#292929" /><circle cx="13.500" cy="12" r="10.500" fill="#2c2255" /><path d="M3 9.500h21M3 12h21M3 14.500h21" stroke="#fff" strokeWidth="1.300" /></TaskIcon>
        <TaskIcon label="Edge" state="active">
          <defs><linearGradient id="ed" x1="0" y1="0" x2="1" y2=".3"><stop offset="0" stopColor="#1b9de2" /><stop offset=".6" stopColor="#36c6c0" /><stop offset="1" stopColor="#64e35c" /></linearGradient></defs>
          <path d="M0 12C1 4 6 0 12 0c7 0 12 5 12 10 0 4-3 6-6 6-2 0-4-.5-4-2 0-.8 1-1 1-3 0-3-3-5-6-5-5 0-8 3-9 6z" fill="url(#ed)" /><path d="M0 12c0-4 4-6 8-6 3 0 6 1 7 4-5-1-7 3-6 6 1 4 5 6 12 4-2 3-5 4-9 4C5 24 0 19 0 12z" fill="#1273cf" /><path d="M9 12c-2 5 1 10 7 11q4-1 5.500-3.200Q14 22 10.500 17 9 15 9 12z" fill="#0b4f9c" />
        </TaskIcon>
        <TaskIcon label="VirtualBox" state="open"><path d="M12 1 22 5 20 17l-8 6-8-6L2 5z" fill="#173a66" stroke="#dfe7f2" strokeWidth="1.800" /><path d="M2 5l10 5 10-5M12 10v12" stroke="#dfe7f2" strokeWidth="1.800" fill="none" /></TaskIcon>
        <TaskIcon label="WinRAR" state="open"><rect y="1" width="24" height="7" fill="#b02a4a" /><rect y="8" width="24" height="7" fill="#4650b5" /><rect y="15" width="24" height="7" fill="#2b8a3c" /><path d="M2 1v21M5 1v21" stroke="#e7c16a" strokeDasharray="4 3" /><rect x="9" y="1" width="6" height="21" fill="#b8682a" /><rect x="7.500" y="8" width="9" height="8" rx="1" fill="#f0b35a" stroke="#fff" /><circle cx="12" cy="5" r="2.500" fill="#f6b13d" /></TaskIcon>
        <TaskIcon label="VS Code" state="open"><path d="M17.500 0 24 3v18l-6.500 3z" fill="#2aa4f4" /><path d="M17.500 0v7L4 18.500 1 16.500v-1.300z" fill="#1277bf" /><path d="M17.500 24v-7L4 5.500 1 7.500v1.300z" fill="#1c8fdd" /></TaskIcon>
        <TaskIcon label="Notepad++" state="open"><path d="M2 1h14l4 4v18H2z" fill="#f4f7ef" stroke="#999" /><path d="M3 12h16v10H3z" fill="#8ad04a" /><path d="M5 8v5M8 8v5M10 10h2M14 10h1" stroke="#222" strokeWidth="1.500" /><path d="m22 1 2 1-7 16-2.500 1.500.5-3z" fill="#e5a52c" /></TaskIcon>
      </div>
      <div className="flex flex-1 items-center justify-end pr-5 text-[11px] leading-4">
        <button aria-label="Iconos ocultos"><ChevronUp className="size-4" /></button>
        <span className="ml-[16px] text-center">ESP<br />LAA</span>
        <Wifi className="ml-[18px] size-[17px]" strokeWidth={1.800} />
        <Volume2 className="ml-[7px] size-[17px]" strokeWidth={1.500} />
        <span className="w-[79px] text-right text-[12px]">13:40<br />27-12-2023</span>
        <FaBell className="ml-[8px] size-[14px] text-[#2b9dfb]" />
      </div>
    </footer>
  );
}

export default function App() {
  return (
    <div className="relative flex h-screen flex-col overflow-hidden bg-[#3b3b3b] font-['Open_Sans','Noto_Sans',sans-serif]">
      <TabBar />
      <Toolbar />
      <div className="flex min-h-0 flex-1 pb-[5px]">
        <div className="flex min-w-0 flex-1 flex-col">
          <BookmarksBar />
          <Page />
        </div>
        <EdgeSidebar />
      </div>
      <Taskbar />
      <svg viewBox="0 0 100 158" className="pointer-events-none absolute right-[35px] bottom-[112px] h-[158px] w-[100px]" aria-hidden="true">
        <path d="M94.500 3 98 5.500 16 141l-4-2.500z" fill="#f23b3b" stroke="#f23b3b" />
        <path d="M3 156 8.500 132l4.500 8 9 1z" fill="#f23b3b" stroke="#888" strokeWidth=".5" />
      </svg>
    </div>
  );
}
